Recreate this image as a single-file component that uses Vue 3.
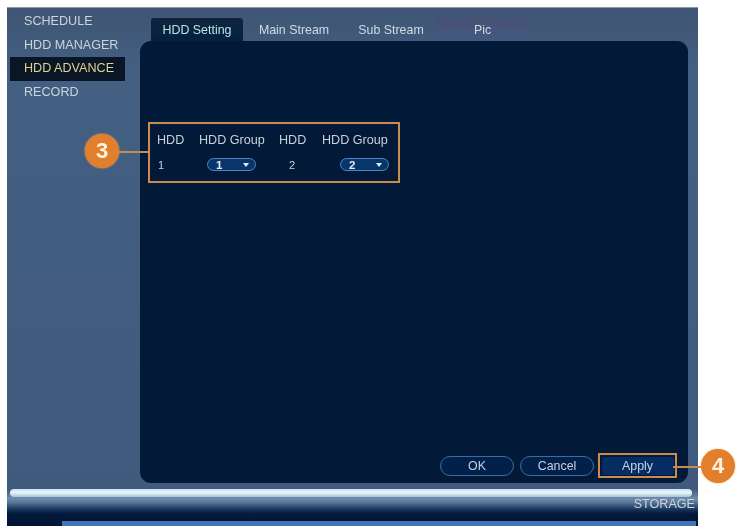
<template>
  <div class="page">
    <div class="screen">
      <div class="main">
        <nav class="menu">
          <a v-for="item in menu" :key="item" :class="{ active: item === current }">{{ item }}</a>
        </nav>

        <div class="content">
          <div class="tabs">
            <span v-for="(tab, i) in tabs" :key="tab" class="tab" :class="{ on: i === 0, last: i === 3 }">{{ tab }}</span>
          </div>

          <section class="panel">
            <div class="groups">
              <span class="badge badge-3">3</span>
              <span class="head">HDD</span>
              <span class="head">HDD Group</span>
              <span class="head">HDD</span>
              <span class="head">HDD Group</span>
              <template v-for="n in [1, 2]" :key="n">
                <span class="num" :class="{ second: n === 2 }">{{ n }}</span>
                <span class="select" :class="{ right: n === 2 }">
                  <b>{{ n }}</b>
                  <i class="arrow"></i>
                </span>
              </template>
            </div>

            <div class="actions">
              <button type="button">OK</button>
              <button type="button">Cancel</button>
              <div class="apply-box">
                <button type="button" class="apply">Apply</button>
                <span class="badge badge-4">4</span>
              </div>
            </div>
          </section>
        </div>
      </div>

      <footer class="bar">
        <div class="gloss"></div>
        <div class="label">STORAGE</div>
        <div class="progress"></div>
      </footer>
    </div>
  </div>
</template>

<script setup>
const menu = ["SCHEDULE", "HDD MANAGER", "HDD ADVANCE", "RECORD"];
const current = "HDD ADVANCE";
const tabs = ["HDD Setting", "Main Stream", "Sub Stream", "Pic"];
</script>

<style>
html,
body {
  margin: 0;
  background: #fff;
}
</style>

<style scoped>
.page {
  width: 740px;
  height: 528px;
  padding: 7px 0 0 7px;
  box-sizing: border-box;
  overflow: hidden;
  background: #fff;
  font-family: "Liberation Sans", Arial, sans-serif;
  filter: blur(0.7px);
}

.screen {
  width: 691px;
  height: 519px;
  display: flex;
  flex-direction: column;
  background: linear-gradient(#3f5573, #435f82 60px, #3f5a7c);
  border-top: 1px solid #8c98a6;
  box-sizing: border-box;
}

.main {
  height: 475px;
  display: flex;
}

.menu {
  width: 133px;
  padding-top: 2px;
  display: flex;
  flex-direction: column;
}

.menu a {
  height: 23.5px;
  line-height: 23.5px;
  margin-left: 3px;
  margin-right: 15px;
  padding-left: 14px;
  font-size: 12.6px;
  color: #ccd4dd;
  white-space: nowrap;
}

.menu a.active {
  background: #0a1526;
  color: #dcd392;
}

.content {
  flex: 1;
  display: flex;
  flex-direction: column;
  padding-right: 10px;
  padding-top: 10px;
}

.tabs {
  height: 23px;
  margin-left: 11px;
  display: grid;
  grid-template-columns: 92px 102px 92px 91px;
}

.tab {
  line-height: 24px;
  text-align: center;
  font-size: 12.4px;
  color: #d2dae3;
}

.tab.on {
  background: linear-gradient(#10233d, #03203f);
  border-radius: 3px 3px 0 0;
  color: #b4e4e4;
}

.tab.last {
  background: linear-gradient(#484f76, #435a80);
}

.panel {
  height: 442px;
  padding: 81px 0 5px 8px;
  box-sizing: border-box;
  display: flex;
  flex-direction: column;
  background: #021a38;
  border-radius: 11px;
}

.groups {
  position: relative;
  width: 252px;
  height: 61px;
  padding: 4px 0 0 7px;
  box-sizing: border-box;
  display: grid;
  grid-template-columns: 42px 80px 43px 78px;
  grid-template-rows: 24px 25px;
  align-items: center;
  border: 2px solid #c88c50;
  font-size: 12.6px;
  color: #c6d1dc;
  white-space: nowrap;
}

.head {
  line-height: 24px;
}

.num {
  font-size: 11px;
  padding-left: 1px;
}

.num.second {
  padding-left: 10px;
}

.select {
  width: 49px;
  height: 13px;
  margin-left: 8px;
  display: flex;
  align-items: center;
  border: 1px solid #4f86c0;
  border-radius: 8px;
  box-sizing: border-box;
  background: #08356c;
  color: #e4ecf3;
  font-size: 11.5px;
  font-weight: bold;
}

.select.right {
  margin-left: 18px;
}

.select b {
  flex: 1;
  padding-left: 8px;
}

.arrow {
  width: 0;
  height: 0;
  margin-right: 6px;
  border: 3px solid transparent;
  border-top: 4px solid #e4ecf3;
  border-bottom: 0;
}

.badge {
  position: absolute;
  width: 34px;
  height: 34px;
  line-height: 34px;
  border-radius: 50%;
  background: #e27f2c;
  box-shadow: 0 0 2px #f0b070;
  text-align: center;
  font-size: 22px;
  font-weight: bold;
  color: #fff3e2;
}

.badge::after {
  content: "";
  position: absolute;
  height: 2px;
  background: #c88c50;
}

.badge-3 {
  left: -65px;
  top: 10px;
}

.badge-3::after {
  left: 33px;
  top: 17px;
  width: 31px;
}

.badge-4 {
  left: 101px;
  top: -6px;
}

.badge-4::after {
  left: -28px;
  top: 17px;
  width: 28px;
}

.actions {
  margin-top: auto;
  margin-right: 11px;
  display: flex;
  justify-content: flex-end;
  align-items: center;
  gap: 6px;
}

.actions button {
  width: 74px;
  height: 20px;
  padding: 0;
  border: 1px solid #3d6d9e;
  border-radius: 10px;
  background: #02214a;
  color: #c8d2dd;
  font-family: inherit;
  font-size: 12.4px;
}

.apply-box {
  position: relative;
  margin-left: -2px;
  width: 79px;
  height: 25px;
  display: flex;
  align-items: center;
  justify-content: center;
  box-sizing: border-box;
  border: 2px solid #c88c50;
}

.actions .apply {
  width: 72px;
  height: 18px;
  border: 0;
  background: #062d63;
  border-radius: 3px;
}

.bar {
  position: relative;
  flex: 1;
  margin-top: 6px;
  background: linear-gradient(
    #3f5a7c,
    #6a7fa3 8px,
    #6f8db0 9px,
    #5c7a9c 13px,
    #123059 21px,
    #021a3c 25px,
    #021436
  );
}

.gloss {
  height: 8px;
  margin: 0 6px 0 3px;
  border-radius: 4px;
  background: linear-gradient(#c8e2ef, #e8f5fa 45%, #a9c3d0);
}

.label {
  text-align: right;
  padding-right: 3px;
  font-size: 12.6px;
  line-height: 14px;
  color: #ccd4dd;
}

.progress {
  position: absolute;
  left: 55px;
  right: 2px;
  bottom: 0;
  height: 5px;
  background: #3f78b4;
}
</style>
